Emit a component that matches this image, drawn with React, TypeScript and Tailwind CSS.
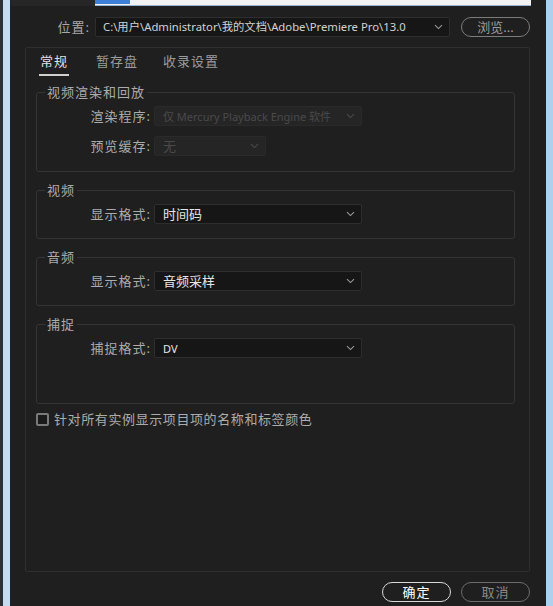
import React from "react"

const font = "font-['Noto_Sans','Noto_Sans_CJK_SC',sans-serif]"

function Chevron({ className = "" }: { className?: string }) {
  return (
    <svg width="9" height="6" viewBox="0 0 9 6" className={className}>
      <path d="M1 1.2 L4.5 4.6 L8 1.2" fill="none" stroke="currentColor" strokeWidth="1.1" />
    </svg>
  )
}

function Select({
  value,
  width,
  disabled = false,
  small = false,
}: {
  value: string
  width: string
  disabled?: boolean
  small?: boolean
}) {
  return (
    <div
      className={`${width} h-[20px] flex items-center justify-between rounded-[2px] border pl-[8px] pr-[6px] ${
        disabled
          ? "bg-[#252525] border-[#2a2a2a] text-[#4a4a4a]"
          : "bg-[#161616] border-[#2e2e2e] text-[#e6e6e6]"
      }`}
    >
      <span className={`${small ? "text-[11px]" : "text-[13px]"} leading-none whitespace-nowrap`}>{value}</span>
      <Chevron className={disabled ? "text-[#4a4a4a]" : "text-[#9a9a9a]"} />
    </div>
  )
}

function Row({ label, children }: { label: string; children: React.ReactNode }) {
  return (
    <div className="flex items-center">
      <span className="w-[117px] pr-[3px] text-right text-[13px] leading-none text-[#acacac] tracking-[1px]">
        {label}
      </span>
      {children}
    </div>
  )
}

function Group({
  title,
  children,
  tall = false,
  first = false,
}: {
  title: string
  children: React.ReactNode
  tall?: boolean
  first?: boolean
}) {
  return (
    <fieldset
      className={`mx-[10px] mr-[14px] rounded-[3px] border border-[#353535] pb-[14px] pt-[6px] ${
        first ? "" : "mt-[10px]"
      } ${tall ? "min-h-[88px]" : ""}`}
    >
      <legend className="ml-[8px] px-[2px] text-[13px] leading-[16px] text-[#acacac] tracking-[1px]">
        {title}
      </legend>
      <div className="flex flex-col gap-[10px]">{children}</div>
    </fieldset>
  )
}

export default function App() {
  return (
    <div className={`w-[553px] h-[606px] flex overflow-hidden bg-[#1f1f1f] ${font}`}>
      {/* window frame, left */}
      <div className="w-[3px] bg-[#2c2f33]" />
      <div className="w-[7px] bg-[#c6dbf0]" />
      <div className="w-[1px] bg-[#1a2230]" />

      <div className="w-[535px] flex flex-col bg-[#1f1f1f]">
        {/* cut-off field above */}
        <div className="h-[6px] flex">
          <div className="w-[84px] bg-[#262626]" />
          <div className="w-[436px] flex bg-[#f2f2f2] border-b border-[#9ab4d0]">
            <div className="w-[35px] h-[4px] bg-[#3d7fd6]" />
          </div>
        </div>

        {/* location */}
        <div className="mt-[11px] flex items-center">
          <span className="w-[84px] pr-[5px] text-right text-[13px] leading-none text-[#a8a8a8] tracking-[1px]">
            位置:
          </span>
          <div className="w-[355px] h-[20px] flex items-center justify-between rounded-[2px] border border-[#2e2e2e] bg-[#161616] pl-[7px] pr-[6px]">
            <span className="text-[11.3px] leading-none text-[#d2d2d2] whitespace-nowrap">
              C:\用户\Administrator\我的文档\Adobe\Premiere Pro\13.0
            </span>
            <Chevron className="text-[#9a9a9a]" />
          </div>
          <button className="ml-[11px] w-[69px] h-[20px] rounded-full border border-[#7c7c7c] text-[13px] leading-none text-[#9c9c9c]">
            浏览...
          </button>
        </div>

        {/* main panel */}
        <div className="mt-[10px] ml-[14px] w-[505px] h-[525px] rounded-[2px] border border-[#2f2f2f] flex flex-col">
          <div className="flex items-end h-[28px] pl-[13px] gap-[27px] text-[13px] tracking-[1px]">
            <div className="flex flex-col items-stretch">
              <span className="leading-none text-[#e2e2e2] px-[1px]">常规</span>
              <div className="mt-[6px] h-[2px] bg-[#cfcfcf]" />
            </div>
            <span className="leading-none pb-[8px] text-[#9c9c9c]">暂存盘</span>
            <span className="leading-none pb-[8px] -ml-[2px] text-[#9c9c9c]">收录设置</span>
          </div>

          <div className="mt-[8px] flex flex-col">
            <Group title="视频渲染和回放" first tall>
              <Row label="渲染程序:">
                <Select value="仅 Mercury Playback Engine 软件" width="w-[208px]" disabled small />
              </Row>
              <Row label="预览缓存:">
                <Select value="无" width="w-[112px]" disabled />
              </Row>
            </Group>

            <Group title="视频">
              <Row label="显示格式:">
                <Select value="时间码" width="w-[208px]" />
              </Row>
            </Group>

            <Group title="音频">
              <Row label="显示格式:">
                <Select value="音频采样" width="w-[208px]" />
              </Row>
            </Group>

            <Group title="捕捉" tall>
              <Row label="捕捉格式:">
                <Select value="DV" width="w-[208px]" small />
              </Row>
            </Group>

            <label className="mt-[9px] ml-[10px] flex items-center gap-[5px]">
              <span className="w-[13px] h-[13px] rounded-[2px] border-2 border-[#7a7a7a] bg-[#1a1a1a]" />
              <span className="text-[13px] leading-none text-[#acacac] tracking-[0.6px]">
                针对所有实例显示项目项的名称和标签颜色
              </span>
            </label>
          </div>
        </div>

        {/* footer buttons */}
        <div className="mt-[10px] flex justify-end gap-[10px] pr-[16px]">
          <button className="w-[69px] h-[20px] rounded-full border-[1.5px] border-[#d8d8d8] text-[13px] leading-none text-white tracking-[1px]">
            确定
          </button>
          <button className="w-[69px] h-[20px] rounded-full border-[1.5px] border-[#6c6c6c] text-[13px] leading-none text-[#8a8a8a] tracking-[1px]">
            取消
          </button>
        </div>
      </div>

      {/* window frame, right */}
      <div className="w-[7px] bg-[#a9d3f3]" />
    </div>
  )
}
